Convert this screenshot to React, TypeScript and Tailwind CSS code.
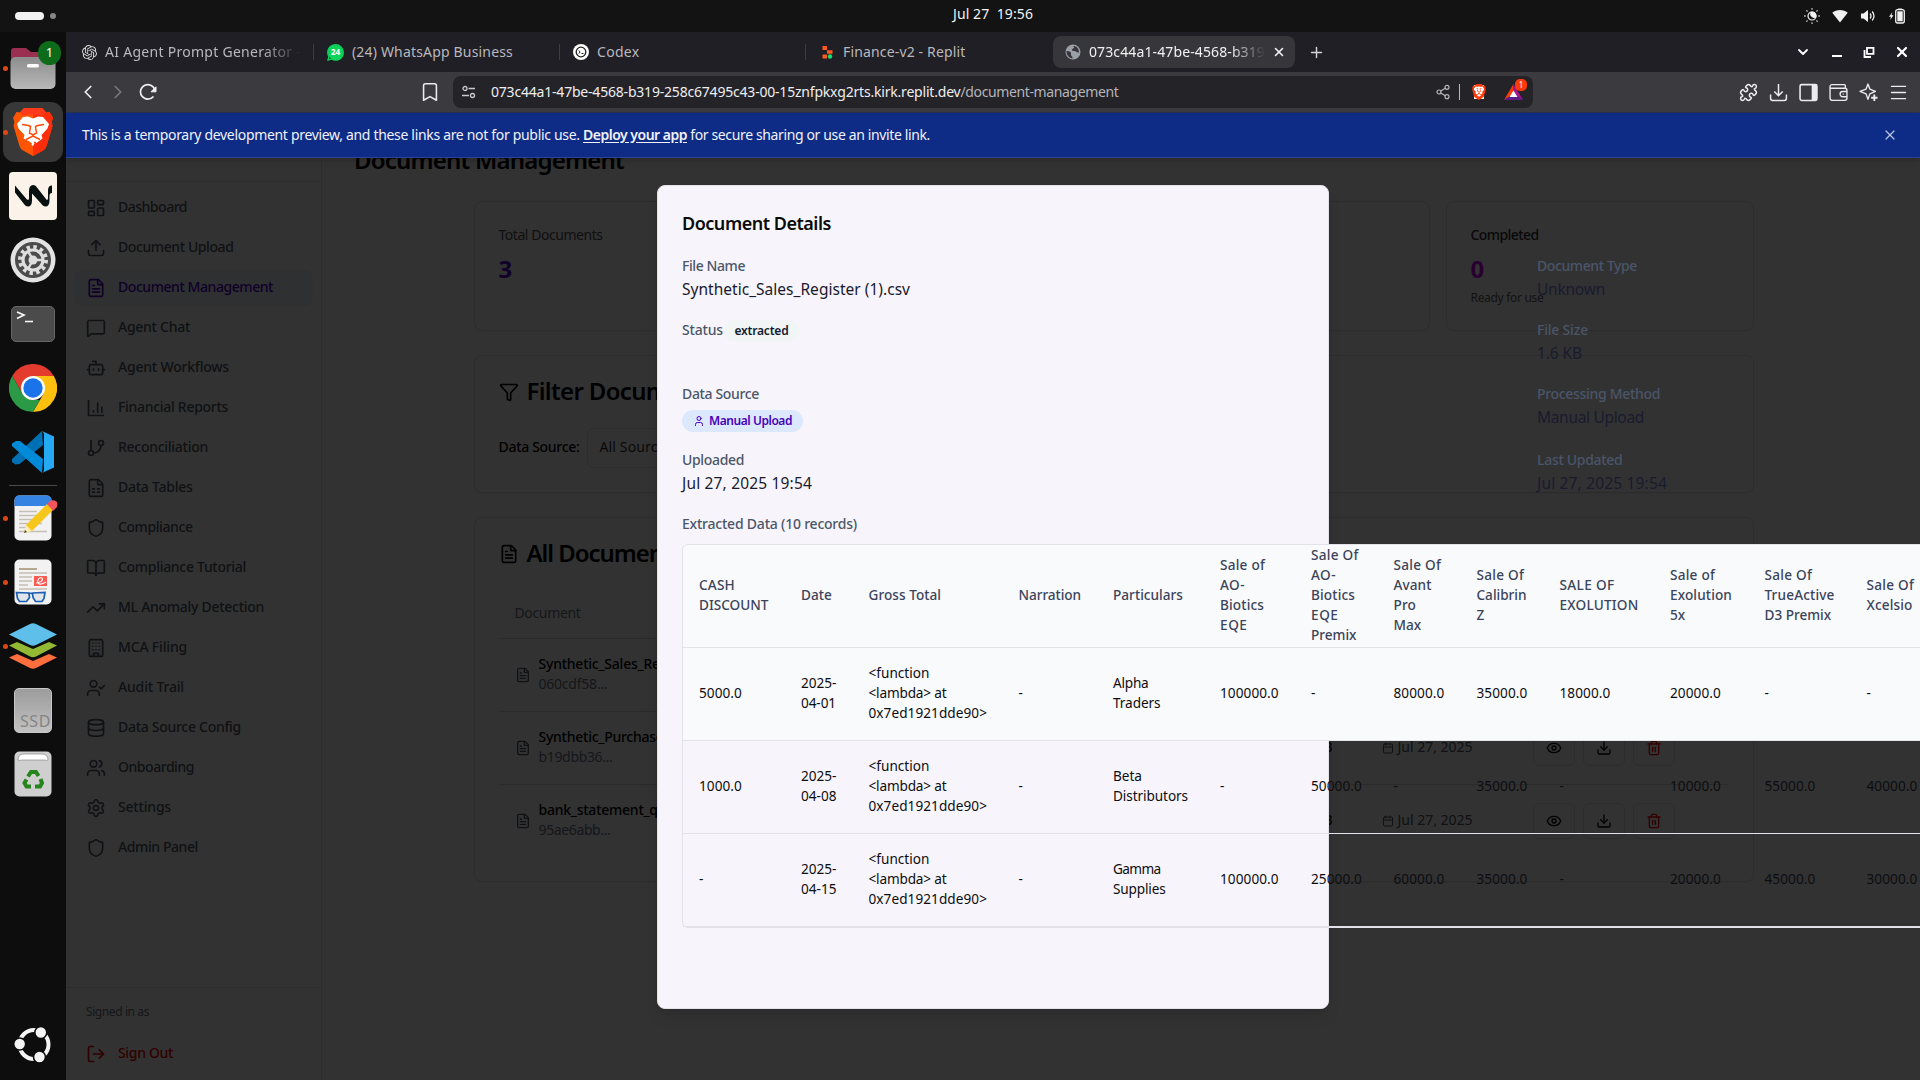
import { useLayoutEffect, useRef, useState, type ReactNode } from "react";
import {
  LayoutDashboard, Upload, FileText, MessageSquare, Bot, GitBranch, FileSpreadsheet, Shield,
  BookOpen, TrendingUp, UserCheck, Database, Users, Settings, LogOut, Filter, Calendar,
  Eye, Download, Trash2, User, X, Plus, ChevronDown, ChevronLeft, ChevronRight, Bookmark,
  Share2, Puzzle, Menu,
} from "lucide-react";
import { SiBrave, SiOpenai, SiWhatsapp } from "react-icons/si";

/* Text set to a given advance width by adjusting its tracking. */
function Fit({ w, children, className = "" }: { w: number; children: string; className?: string }) {
  const ref = useRef<HTMLSpanElement>(null);
  const [spacing, setSpacing] = useState(0);
  useLayoutEffect(() => {
    if (ref.current) {
      const natural = ref.current.getBoundingClientRect().width - spacing * children.length;
      setSpacing((w - natural) / children.length);
    }
  }, [w, children]);
  return (
    <span ref={ref} className={`whitespace-pre ${className}`} style={{ letterSpacing: `${spacing}px` }}>
      {children}
    </span>
  );
}

/* ---------- Desktop bar ---------- */

function TopBar() {
  return (
    <header className="flex h-8 shrink-0 items-center bg-[#131313] text-[#f2f2f2]">
      <div className="flex w-[953px] items-center gap-1.5 pl-[15px]">
        <div className="h-2 w-[29px] rounded-full bg-[#f2f2f2]" />
        <div className="size-1.5 rounded-full bg-[#868686]" />
      </div>
      <div className="-mt-1 flex-1 text-[14px] leading-5">
        <Fit w={80}>{"Jul 27  19:56"}</Fit>
      </div>
      <div className="flex items-center gap-3 pr-3.5">
        <svg viewBox="0 0 16 16" className="size-4">
          <circle cx="8" cy="8" r="4" fill="none" stroke="#f2f2f2" strokeWidth="1.2" />
          <path d="M8 3.6a4.4 4.4 0 0 1 4.2 6A4.4 4.4 0 0 1 6.4 4z" fill="#f2f2f2" />
          <g stroke="#b5b5b5" strokeWidth="1.3">
            <path d="M8 0v1.8M8 14.2V16M0 8h1.8M14.2 8H16M2.3 2.3l1.3 1.3M12.4 12.4l1.3 1.3M2.3 13.7l1.3-1.3M12.4 3.6l1.3-1.3" />
          </g>
        </svg>
        <svg viewBox="0 0 16 16" className="size-4">
          <path d="M8 14.5.3 4.8C4.5 1 11.5 1 15.7 4.8z" fill="#f2f2f2" />
        </svg>
        <svg viewBox="0 0 16 16" className="size-4">
          <path d="M1 5.5h2.5L8 2v12l-4.5-3.5H1z" fill="#f2f2f2" />
          <path d="M10 5.5q2 2.5 0 5M12.2 3.5q3.6 4.500 0 9" fill="none" stroke="#f2f2f2" strokeWidth="1.3" />
        </svg>
        <svg viewBox="0 0 18 16" className="h-4 w-[18px]">
          <path d="M4.5 4 1 8.8h2L2.200 12l3.300-4.700h-2z" fill="#f2f2f2" />
          <rect x="7.7" y="1.7" width="8.6" height="13.3" rx="2" fill="none" stroke="#f2f2f2" strokeWidth="1.3" />
          <rect x="9.3" y="3.3" width="5.4" height="10" fill="#f2f2f2" />
          <path d="M10 .5h4V2h-4z" fill="#f2f2f2" />
        </svg>
      </div>
    </header>
  );
}

/* ---------- Dock ---------- */

function Slot({ dot, children }: { dot?: boolean; children: ReactNode }) {
  return (
    <div className="relative flex h-16 items-center justify-center">
      {dot && <i className="absolute left-[3px] size-[5px] rounded-full bg-[#dd4814]" />}
      {children}
    </div>
  );
}

const Lines = () => (
  <path d="M5 16.500h18M5 20.500h23M5 24.500h15M5 28.500h23M5 32.500h10M5 36.500h28" stroke="#c4bfb4" strokeWidth="1.7" />
);

function Dock() {
  return (
    <nav className="flex w-[66px] shrink-0 flex-col bg-[#0d0d0d] pt-1">
      <Slot dot>
        <svg viewBox="0 0 46 44" className="size-[46px]">
          <path d="M1 5q0-3 3-3h12l5 4h20q4 0 4 4v15H1z" fill="#9b2f52" />
          <rect x="0.5" y="11" width="45" height="32" rx="5" fill="url(#fg)" />
          <rect x="17" y="18" width="12" height="3.5" rx="1.5" fill="#fff" />
          <defs><linearGradient id="fg" x2="0" y2="1"><stop stopColor="#8d8d8d" /><stop offset="1" stopColor="#b8b8b8" /></linearGradient></defs>
        </svg>
        <b className="absolute left-[38px] top-[5px] flex h-6 w-[23px] items-center justify-center rounded-full bg-[#0e6b19] text-[13px] font-normal text-white">1</b>
      </Slot>
      <Slot dot>
        <div className="flex size-[60px] items-center justify-center rounded-xl bg-[#383838]">
          <svg viewBox="0 0 40 48" className="h-12 w-10">
            <path d="M11 0h18l4 4.500 3.500-.5L40 10l-1.500 4 1 4-6 20q-1 3-3.500 4.500L20 48l-10-5.500Q7.500 41 6.500 38l-6-20 1-4L0 10l3.500-6 3.500.5z" fill="#ff5500" />
            <path d="M20 0h9l4 4.500 3.500-.5L40 10l-1.500 4 1 4-6 20q-1 3-3.500 4.500L20 48z" fill="#ff2d0a" />
            <path d="M11 0h18l4 4.500-3 3q-10-2-20 0l-3-3z" fill="#ff3a1c" />
            <path d="M20 10.500l5-2 5 .5 6 7-1.500 4.500-6 6.500 1 3.500-6 4.500-1.500-1.500-1 .5.500 1.500L20 38l-1.500-1 .5-1.500-2.500-2L10.500 30.500l1-3.500-6-6.500L4 16l6-7 5-.5z" fill="#fff" />
            <path d="M9 16.500l6.500 1 2 1-1 6.500 3.500 2 3.500-2-1-6.500 2-1 6.500-1M13 31.500l7-3.500 7 3.500" fill="none" stroke="#ff4a08" strokeWidth="1.5" />
          </svg>
        </div>
      </Slot>
      <Slot>
        <svg viewBox="0 0 48 48" className="size-12">
          <rect width="48" height="48" rx="4" fill="#fbf3ea" />
          <path d="M6 13.500 17.500 27c1.500 1.500 2.500 1 2.500-1v-7c0-4 1.500-6 4-6 2 0 3 1 4 2.500L37 27c1 1.500 2 1 2-1v-6.500c0-4 1-6 4-6V21c-2 0-2.500 1-2.500 3v4.500c0 4-1.500 6-4 6-2 0-3-1-4-2.500L23 21.500V28.500c0 4-1.500 6-4 6-2 0-3-1-4-2.500L6 20.500z" fill="#071210" />
        </svg>
      </Slot>
      <Slot>
        <svg viewBox="0 0 46 46" className="size-[46px]">
          <circle cx="23" cy="23" r="22.5" fill="#e3e3e3" />
          <circle cx="23" cy="23" r="18" fill="#4b4b4b" />
          <circle cx="23" cy="23" r="13" fill="none" stroke="#dedede" strokeWidth="4" strokeDasharray="3.4 3.4" />
          <circle cx="23" cy="23" r="10" fill="none" stroke="#dedede" strokeWidth="3.2" />
          <circle cx="23" cy="23" r="4.5" fill="#dedede" />
          <path d="M23 23h9M23 23l-4.500-8M23 23l-4.500 8" stroke="#dedede" strokeWidth="2.5" />
        </svg>
      </Slot>
      <Slot>
        <div className="h-9 w-11 rounded-[5px] border border-[#666] bg-[#4b4b4b]">
          <svg viewBox="0 0 44 36" className="h-9 w-11">
            <path d="M5 5l7 3-7 3.500M13 14.500h8" fill="none" stroke="#fff" strokeWidth="1.6" />
          </svg>
        </div>
      </Slot>
      <Slot>
        <svg viewBox="0 0 48 48" className="size-12">
          <path d="M3.200 12A24 24 0 0 1 44.800 12H24L13.600 30z" fill="#e33b2e" />
          <path d="M44.800 12A24 24 0 0 1 24 48l10.400-18L34 12z" fill="#fdc00f" />
          <path d="M24 12h20.800l-5 12H30z" fill="#fdc00f" />
          <path d="M3.200 12 13.600 30 24 36h6.900L24 48A24 24 0 0 1 3.200 12z" fill="#2a9a47" />
          <circle cx="24" cy="24" r="12" fill="#fff" />
          <circle cx="24" cy="24" r="9.7" fill="#1a73e8" />
        </svg>
      </Slot>
      <Slot>
        <svg viewBox="0 0 42 42" className="size-[42px]">
          <path d="M30 0 0 28v3l3.500 2.500 4-.5L31 14z" fill="#0070b5" />
          <path d="M4 10 0 12.500V15l30 27 1-14L8 10z" fill="#008ad8" />
          <path d="M30 0l12 5.500v31L30 42q2-1 2-4V4q0-3-2-4z" fill="#24a9f2" />
        </svg>
      </Slot>
      <div className="mx-[9px] mt-px h-px bg-[#4a4a4a]" />
      <Slot dot>
        <svg viewBox="0 0 44 46" className="ml-[5px] h-[46px] w-11">
          <rect width="37" height="45" rx="5" x=".5" y=".5" fill="#f2f2f2" />
          <path d="M.5 11V5.500q0-5 5-5h27q5 0 5 5V11z" fill="#3584e4" />
          <Lines />
          <path d="M10 38l2-8L33 9l6 6-21 21z" fill="#f6c71a" />
          <path d="M10 38l2-8 6 6z" fill="#fbeebb" />
          <path d="M10 38l1-3 2 2z" fill="#444" />
          <path d="M33 9l3-3q4-2 7 1 1 4-1 6l-3 3z" fill="#f2545b" />
        </svg>
      </Slot>
      <Slot dot>
        <svg viewBox="0 0 38 46" className="h-[46px] w-[38px]">
          <rect width="37" height="45" rx="5" x=".5" y=".5" fill="#f2f2f2" />
          <path d="M5 10h18" stroke="#b5a88f" strokeWidth="2" />
          <path d="M5 14h28M5 18h13M5 22h13M5 26h9M5 30h28" stroke="#c4bfb4" strokeWidth="1.7" />
          <path d="M20 17h13v10H20z" fill="#fa5b52" />
          <path d="M22 24c3 0 8-2 6-5-3-1-5 2-4 5 1 2 5 1 8-1" fill="none" stroke="#fff" strokeWidth="1.1" />
          <g fill="#dfe5ea" stroke="#1d5fb0" strokeWidth="1.7">
            <path d="M2.500 33.500 15 34l.5 4.500-3 4H5.500l-2-3zM18.500 34l12.500-.5-1 6-2 3h-6.500l-2.500-4z" />
            <path d="M14 35q2.500-1.500 5 0" fill="none" />
          </g>
        </svg>
      </Slot>
      <Slot dot>
        <svg viewBox="0 0 48 46" className="h-[46px] w-12">
          <path d="M0 34.500 8 31l16 7 16-7 8 3.500L27 45q-3 1.500-6 0z" fill="#ff6f3d" />
          <path d="M0 22.500 8 19l16 7 16-7 8 3.500L27 33.500q-3 1.500-6 0z" fill="#93b833" />
          <path d="M0 11.500 21 1q3-1.500 6 0l21 10.500L27 22q-3 1.500-6 0z" fill="#5dbfea" />
        </svg>
      </Slot>
      <Slot>
        <div className="flex h-[45px] w-[38px] items-end justify-end rounded-[5px] border border-[#c8c8c8] bg-linear-to-b from-[#9c9c9c] to-[#c2c2c2] pb-px text-[16px] leading-5 text-[#858585]">
          <Fit w={31}>SSD</Fit>
        </div>
      </Slot>
      <Slot>
        <svg viewBox="0 0 38 46" className="h-[46px] w-[38px]">
          <rect width="37" height="45" rx="5" x=".5" y=".5" fill="#cfcfcf" />
          <path d="M4 9q0-6 6-6h18q6 0 6 6-2 1-3 0H8Q5 10 4 9z" fill="#fff" stroke="#777" strokeWidth=".6" />
          <g fill="none" stroke="#26861d" strokeWidth="4">
            <path d="M14 25.500l3-4.500h5l2.500 4" />
            <path d="M26.500 28l1.500 4-2 3.500h-5" />
            <path d="M17 35.500h-4.500L10.500 32l2-3.500" />
          </g>
        </svg>
      </Slot>
      <div className="mb-[17px] mt-auto flex justify-center">
        <svg viewBox="0 0 38 38" className="size-[38px]">
          <circle cx="20" cy="19.5" r="14.5" fill="none" stroke="#f4f4f4" strokeWidth="4" />
          <g fill="#f4f4f4" stroke="#0d0d0d" strokeWidth="1.6">
            <circle cx="5.7" cy="19" r="6" /><circle cx="26.8" cy="7.5" r="6" /><circle cx="25.5" cy="32" r="6" />
          </g>
        </svg>
      </div>
    </nav>
  );
}

/* ---------- Browser ---------- */

function Tabs() {
  return (
    <div className="flex h-10 shrink-0 items-center bg-[#201f25] text-[14px] leading-5 text-[#b9b8bd]">
      <div className="flex w-[247px] items-center gap-2 pl-4">
        <SiOpenai className="size-[15px] text-[#d8d8d8]" />
        <span className="-mt-px w-[196px] overflow-hidden mask-r-from-80%"><Fit w={196}>AI Agent Prompt Generator -</Fit></span>
      </div>
      <div className="flex h-4 w-[246px] items-center border-l border-[#3d3c42] pl-[13px]">
        <span className="relative flex size-[17px] items-center justify-center">
          <SiWhatsapp className="size-[17px] text-[#0ad55a]" />
          <span className="absolute inset-px flex items-center justify-center rounded-full bg-[#0ad55a] text-[8px] font-bold text-white">24</span>
        </span>
        <span className="-mt-px ml-2"><Fit w={161}>(24) WhatsApp Business</Fit></span>
      </div>
      <div className="flex h-4 w-[246px] items-center border-l border-[#3d3c42] pl-[13px]">
        <svg viewBox="0 0 16 16" className="size-4">
          <circle cx="8" cy="8" r="8" fill="#fff" />
          <circle cx="8" cy="8" r="4.8" fill="none" stroke="#222" strokeWidth="1.3" />
          <path d="M6 6.500l1 1.500-1 1.500M8.500 9.500h2" fill="none" stroke="#222" />
        </svg>
        <span className="-mt-px ml-2"><Fit w={42.5}>Codex</Fit></span>
      </div>
      <div className="flex h-4 w-[248px] items-center border-l border-[#3d3c42] pl-4">
        <svg viewBox="0 0 11 13" className="h-[13px] w-[11px]">
          <path d="M.5 0H5v4H.5zM5 4.200h5.500v3.500H5zM.5 8.500H5v4H.5z" fill="#ff5a1a" />
          <circle cx="8" cy="10.5" r="2.2" fill="#16e06e" />
        </svg>
        <span className="-mt-px ml-2.5"><Fit w={122.5}>Finance-v2 - Replit</Fit></span>
      </div>
      <div className="flex h-8 w-[242px] items-center rounded-lg bg-[#37363b] pl-3 text-[#f1f1f3]">
        <svg viewBox="0 0 16 16" className="size-4">
          <circle cx="8" cy="8" r="7.5" fill="#9aa0a6" />
          <path d="M1.500 7c3 0 5 1 4.500 3s2 2 1.500 4.500A7 7 0 0 1 1.500 7zM8 2c2 1 1 2-.5 3s0 2 2 2 2 2 4.500 1.500C14 4 11 1.700 8 2z" fill="#37363b" />
        </svg>
        <span className="-mt-px ml-2 w-[176px] overflow-hidden mask-r-from-80%"><Fit w={176}>073c44a1-47be-4568-b319</Fit></span>
        <X className="ml-[7px] size-3.5" strokeWidth={2.8} />
      </div>
      <Plus className="ml-[13px] size-[17px] text-[#d6d6d8]" />
      <div className="ml-auto flex items-center pr-2.5 text-white">
        <ChevronDown className="mr-[20px] size-4" strokeWidth={2.7} />
        <svg viewBox="0 0 12 14" className="mr-5 h-3.5 w-3"><path d="M1 11h10" stroke="#fff" strokeWidth="2" /></svg>
        <svg viewBox="0 0 12 12" className="mr-[19px] size-3">
          <path d="M4 1.800h6.500v6H4zM1.500 4v7H8" fill="none" stroke="#fff" strokeWidth="1.8" />
        </svg>
        <X className="size-4" strokeWidth={3.2} />
      </div>
    </div>
  );
}

function Toolbar() {
  return (
    <div className="flex h-[41px] shrink-0 items-center border-b border-[#2c3050] bg-[#3b3a3f] pl-[11px] text-[#ececee]">
      <ChevronLeft className="h-6 w-[22px]" strokeWidth={1.9} />
      <ChevronRight className="ml-2 h-6 w-[22px] text-[#7d7c81]" strokeWidth={1.6} />
      <svg viewBox="0 0 18 18" className="ml-2.5 size-[18px]">
        <path d="M14.500 13.500A7.300 7.300 0 1 1 16 7.500" fill="none" stroke="#f0f0f0" strokeWidth="1.7" />
        <path d="M12 8.800h5V3.800z" fill="#f0f0f0" stroke="#f0f0f0" />
      </svg>
      <Bookmark className="ml-[262px] size-[22px]" strokeWidth={1.7} />
      <div className="ml-3 flex h-8 w-[1080px] items-center rounded-lg bg-[#242328] text-[14px] leading-5">
        <svg viewBox="0 0 14 14" className="ml-[9px] size-3.5">
          <g fill="none" stroke="#c9c8cc" strokeWidth="1.3"><circle cx="3" cy="3.5" r="2" /><path d="M6.500 3.500H13M0 10.500h7" /><circle cx="10.5" cy="10.5" r="2" /></g>
        </svg>
        <span className="ml-[15px] text-[#eeeef0]"><Fit w={469.5}>073c44a1-47be-4568-b319-258c67495c43-00-15znfpkxg2rts.kirk.replit.dev</Fit></span>
        <span className="text-[#b5b4b9]"><Fit w={158}>/document-management</Fit></span>
        <Share2 className="ml-auto size-4 text-[#b9b8bd]" strokeWidth={1.7} />
        <div className="ml-2 h-4 w-px bg-[#b9b8bd]" />
        <span className="relative ml-[11px] flex h-[20px] w-4 items-center justify-center">
          <i className="absolute inset-x-[3px] inset-y-[3px] bg-white" />
          <SiBrave className="relative h-5 w-[17px] text-[#ff3a0a]" />
        </span>
        <span className="relative ml-[17px] mr-2.5 h-5 w-[19px]">
          <svg viewBox="0 0 19 18" className="mt-px h-[18px] w-[19px]">
            <path d="M9.500 1 0 17l9.500-6z" fill="#ff3a0a" /><path d="M9.500 1 19 17l-9.500-6z" fill="#a3168f" />
            <path d="M0 17h19l-9.500-6z" fill="#5d1b8c" /><path d="M9.500 7.500 5.500 14h8z" fill="#fff" />
          </svg>
          <i className="absolute -top-[3px] left-[11px] flex size-3 items-center justify-center rounded-[5px] bg-[#ff3a0a] text-[8px] not-italic text-white">1</i>
        </span>
      </div>
      <div className="ml-auto flex items-center gap-[11px] pr-3">
        <Puzzle className="size-[19px]" strokeWidth={1.9} />
        <svg viewBox="0 0 18 18" className="size-[19px]"><path d="M9 1v10.500M5 8l4 4 4-4M1.500 11v3.500q0 2 2 2h11q2 0 2-2V11" fill="none" stroke="#ececee" strokeWidth="1.4" /></svg>
        <svg viewBox="0 0 18 18" className="size-[19px]"><rect x="1" y="1.5" width="16" height="15" rx="1.5" fill="none" stroke="#ececee" strokeWidth="1.5" /><path d="M12 1.500h5v15h-5z" fill="#ececee" /></svg>
        <svg viewBox="0 0 18 18" className="size-[19px]"><path d="M15.500 5V2.500q0-1-1-1H3q-2 0-2 2T3 5h12q2 0 2 2v7.500q0 2-2 2H3.500q-2.500 0-2.500-2.500V3.500M17 8h-4a2.500 2.500 0 0 0 0 5h4M13 10.500h1" fill="none" stroke="#ececee" strokeWidth="1.3" /></svg>
        <svg viewBox="0 0 18 18" className="size-[19px]"><path d="M8.500 1l1.800 4.700L15.500 8l-5.200 2.300L8.500 15.500 6.700 10.300 1 8l5.700-2.300z" fill="none" stroke="#ececee" strokeWidth="1.3" strokeLinejoin="round" /><path d="M14.500 11v6M11.500 14h6" stroke="#ececee" strokeWidth="1.8" /></svg>
        <Menu className="-mx-px size-[21px]" strokeWidth={1.5} />
      </div>
    </div>
  );
}

function Banner() {
  return (
    <div className="relative z-20 flex h-[45px] shrink-0 items-center border-b border-[#2a4597] bg-[#0e2b85] pl-4 text-[14px] leading-5 text-[#f0f2fa] shadow-md">
      <span className="-mt-px flex">
        <Fit w={501}>{"This is a temporary development preview, and these links are not for public use. "}</Fit>
        <Fit w={104} className="font-semibold underline underline-offset-2">Deploy your app</Fit>
        <Fit w={243}>{" for secure sharing or use an invite link."}</Fit>
      </span>
      <X className="ml-auto mr-[22px] size-4 text-[#b9c3e6]" strokeWidth={1.8} />
    </div>
  );
}

/* ---------- Application page ---------- */

function ReportIcon() {
  return (
    <svg viewBox="0 0 24 24" className="size-5" fill="none" stroke="currentColor" strokeWidth="2" strokeLinecap="round">
      <path d="M3 3v18h18M9 17v-2M14 17V6M19 17v-6" />
    </svg>
  );
}

function OfficeIcon() {
  return (
    <svg viewBox="0 0 24 24" className="size-5" fill="none" stroke="currentColor" strokeWidth="2" strokeLinecap="round">
      <rect x="4" y="2" width="16" height="20" rx="2" />
      <path d="M9 22v-3.500h6V22M8 6h.01M12 6h.01M16 6h.01M8 10h.01M12 10h.01M16 10h.01M8 14h.01M12 14h.01M16 14h.01" />
    </svg>
  );
}

const ic = "size-5";
const NAV: [string, number, ReactNode][] = [
  ["Dashboard", 69, <LayoutDashboard className={ic} />],
  ["Document Upload", 115.5, <Upload className={ic} />],
  ["Document Management", 155, <FileText className={ic} />],
  ["Agent Chat", 72, <MessageSquare className={ic} />],
  ["Agent Workflows", 111, <Bot className={ic} />],
  ["Financial Reports", 110, <ReportIcon />],
  ["Reconciliation", 90, <GitBranch className={ic} />],
  ["Data Tables", 74.5, <FileSpreadsheet className={ic} />],
  ["Compliance", 74.5, <Shield className={ic} />],
  ["Compliance Tutorial", 128, <BookOpen className={ic} />],
  ["ML Anomaly Detection", 146, <TrendingUp className={ic} />],
  ["MCA Filing", 69, <OfficeIcon />],
  ["Audit Trail", 66, <UserCheck className={ic} />],
  ["Data Source Config", 123, <Database className={ic} />],
  ["Onboarding", 76, <Users className={ic} />],
  ["Settings", 53, <Settings className={ic} />],
  ["Admin Panel", 80, <Shield className={ic} />],
];

function Sidebar() {
  return (
    <aside className="flex w-64 shrink-0 flex-col border-r border-[#e2e2e2]">
      <div className="h-6 shrink-0 border-b border-[#dedede]" />
      <div className="flex flex-1 flex-col gap-1 p-2">
        {NAV.map(([name, w, icon]) => (
          <div
            key={name}
            className={`flex h-9 items-center gap-3 rounded-lg px-3 text-sm font-medium ${
              name === "Document Management" ? "bg-[#ebeff6] text-[#5200c8]" : "text-[#4b5563]"
            }`}
          >
            {icon}
            <span className="-mt-0.5"><Fit w={w}>{name}</Fit></span>
          </div>
        ))}
      </div>
      <div className="flex h-[93px] flex-col border-t border-[#dedede] px-5 pt-4 text-xs text-[#6b7280]">
        <Fit w={63} className="w-fit">Signed in as</Fit>
        <div className="mt-[24px] flex items-center gap-3 text-sm font-medium text-[#f00000]">
          <LogOut className={ic} />
          <span className="-mt-0.5"><Fit w={55}>Sign Out</Fit></span>
        </div>
      </div>
    </aside>
  );
}

const CARD = "rounded-lg border border-[#dcdcdc] bg-[#fafafa] shadow-xs";

function Stat({ label, lw, value, note, tone, labelTone }: { label: string; lw: number; value: string; note?: string; tone: string; labelTone: string }) {
  return (
    <div className={`h-[130px] px-6 pt-[23px] ${CARD}`}>
      <div className={`text-sm ${labelTone}`}><Fit w={lw}>{label}</Fit></div>
      <div className={`mt-2 text-2xl font-bold leading-8 ${tone}`}>{value}</div>
      {note && <div className="mt-1 pt-px text-xs text-[#606060]"><Fit w={73}>{note}</Fit></div>}
    </div>
  );
}

const DOCS: [string, number, string, number][] = [
  ["Synthetic_Sales_Register (1).csv", 202, "060cdf58...", 69],
  ["Synthetic_Purchase_Register.csv", 206, "b19dbb36...", 74],
  ["bank_statement_q1.csv", 151, "95ae6abb...", 72],
];

function Page() {
  return (
    <main className="flex flex-1 flex-col pr-[15px] text-black">
      <h1 className="-mt-[14px] ml-8 text-2xl font-semibold leading-8"><Fit w={270}>Document Management</Fit></h1>
      <div className="mx-auto mt-[25px] flex w-[1280px] flex-col gap-6">
        <div className="grid grid-cols-4 gap-4">
          <Stat label="Total Documents" lw={104} value="3" tone="text-[#5200c8]" labelTone="text-[#505050]" />
          <Stat label="Pending" lw={52} value="0" tone="text-[#5200c8]" labelTone="text-[#505050]" />
          <Stat label="Processing" lw={70} value="3" tone="text-[#5200c8]" labelTone="text-[#505050]" />
          <Stat label="Completed" lw={68} value="0" note="Ready for use" tone="text-[#c800f0]" labelTone="text-[#303030] font-medium" />
        </div>
        <section className={`h-[138px] px-6 pt-[19px] ${CARD}`}>
          <h2 className="flex items-center gap-2 text-2xl font-semibold leading-8">
            <Filter className="mt-0.5 size-5" /><Fit w={190}>Filter Documents</Fit>
          </h2>
          <div className="mt-[21px] flex items-center text-sm font-medium">
            <span className="-mt-0.5 w-[88px]"><Fit w={81}>Data Source:</Fit></span>
            <span className="flex h-10 w-48 items-center rounded-md border border-[#dcdcdc] px-3 font-normal text-[#303030]"><span className="-mt-0.5"><Fit w={73}>All Sources</Fit></span></span>
          </div>
        </section>
        <section className={`h-[365px] px-6 pt-[19px] ${CARD}`}>
          <h2 className="flex items-center gap-2 text-2xl font-semibold leading-8">
            <FileText className="mt-0.5 size-5" /><Fit w={156}>All Documents</Fit>
          </h2>
          <div className="mt-[21px] flex h-[49px] items-center border-b border-[#cfcfcf] px-4 pb-0.5 text-sm text-[#6b7280]"><Fit w={66}>Document</Fit></div>
          {DOCS.map(([name, w, id, iw], i) => (
            <div key={id} className={`flex h-[73px] items-center px-4 text-sm ${i < 2 ? "border-b border-[#cfcfcf]" : "pb-px"}`}>
              <FileText className="mr-2 size-4 text-[#4b5563]" />
              <div className="flex w-[780px] flex-col pb-0.5">
                <Fit w={w} className="w-fit font-medium">{name}</Fit>
                <Fit w={iw} className="w-fit text-[#6b7280]">{id}</Fit>
              </div>
              <span className="-mt-0.5 w-[63px] pl-[5px]"><Fit w={9}>B</Fit></span>
              <span className="flex w-[151px] items-center gap-1 text-[#4b5563]"><Calendar className="size-3" /><span className="-mt-0.5"><Fit w={75}>Jul 27, 2025</Fit></span></span>
              <div className="flex gap-2">
                {[Eye, Download, Trash2].map((Icon, k) => (
                  <span key={k} className={`flex h-9 w-[42px] items-center justify-center rounded-md border border-[#dcdcdc] ${k === 2 ? "text-[#ff0000]" : ""}`}>
                    <Icon className="size-4" />
                  </span>
                ))}
              </div>
            </div>
          ))}
        </section>
      </div>
    </main>
  );
}

/* ---------- Document details dialog ---------- */

function Field({ label, lw, value, vw }: { label: string; lw: number; value?: string; vw?: number }) {
  return (
    <div className="flex flex-col text-[#1a1a2e]">
      <Fit w={lw} className="w-fit text-sm font-medium text-[#4b5569]">{label}</Fit>
      {value && <Fit w={vw ?? 0} className="-mt-px w-fit text-[15.5px] leading-7">{value}</Fit>}
    </div>
  );
}

type Line = [string, number];
const HEAD: Line[][] = [
  [["CASH", 36], ["DISCOUNT", 69.5]],
  [["Date", 31]],
  [["Gross Total", 72.5]],
  [["Narration", 62.5]],
  [["Particulars", 70]],
  [["Sale of", 45], ["AO-", 25], ["Biotics", 44], ["EQE", 27.5]],
  [["Sale Of", 47.5], ["AO-", 25], ["Biotics", 44], ["EQE", 27.5], ["Premix", 45.5]],
  [["Sale Of", 47.5], ["Avant", 38], ["Pro", 22.5], ["Max", 27.5]],
  [["Sale Of", 47.5], ["Calibrin", 50], ["Z", 8.5]],
  [["SALE OF", 55], ["EXOLUTION", 79]],
  [["Sale of", 45], ["Exolution", 62], ["5x", 15]],
  [["Sale Of", 47.5], ["TrueActive", 70], ["D3 Premix", 66.5]],
  [["Sale Of", 47.5], ["Xcelsio", 46]],
];
const LAMBDA: Line[] = [["<function", 61], ["<lambda> at", 78], ["0x7ed1921dde90>", 118.5]];
const dash: Line[] = [["-", 5]];
const num = (s: string): Line[] => [[s, s.length * 7.9 - 4.5]];
const ROWS: Line[][][] = [
  [num("5000.0"), [["2025-", 35.5], ["04-01", 35]], LAMBDA, dash, [["Alpha", 35.5], ["Traders", 47.5]], num("100000.0"), dash, num("80000.0"), num("35000.0"), num("18000.0"), num("20000.0"), dash, dash],
  [num("1000.0"), [["2025-", 35.5], ["04-08", 35.5]], LAMBDA, dash, [["Beta", 29], ["Distributors", 75]], dash, num("50000.0"), dash, num("35000.0"), dash, num("10000.0"), num("55000.0"), num("40000.0")],
  [dash, [["2025-", 35.5], ["04-15", 35.5]], LAMBDA, dash, [["Gamma", 47.5], ["Supplies", 52.5]], num("100000.0"), num("25000.0"), num("60000.0"), num("35000.0"), dash, num("20000.0"), num("45000.0"), num("30000.0")],
];

function Row({ cells, className }: { cells: Line[][]; className: string }) {
  return (
    <div className={`grid grid-cols-[102px_67.5px_150px_94.5px_107px_91px_82.5px_83px_83px_110.5px_94.5px_102px_90px] items-center border-b border-[#e4e2e9] ${className}`}>
      {cells.map((lines, i) => (
        <div key={i} className="flex flex-col px-4 pb-0.5">
          {lines.map(([t, w], k) => <Fit key={k} w={w} className="w-fit">{t}</Fit>)}
        </div>
      ))}
    </div>
  );
}

function Dialog() {
  return (
    <div className="absolute left-[591px] top-[27px] z-10 flex h-[824px] w-[672px] flex-col rounded-lg border border-[#e4e2e9] bg-[#f7f5fb] px-6 pt-6 shadow-lg">
      <h3 className="mt-px text-lg font-semibold leading-6 text-[#0a0a0a]"><Fit w={149}>Document Details</Fit></h3>
      <div className="mt-[21px] grid w-[1200px] grid-cols-[855px_1fr] grid-rows-[64px_64px_66px_64px] text-sm">
        <Field label="File Name" lw={63} value="Synthetic_Sales_Register (1).csv" vw={228} />
        <Field label="Document Type" lw={100} value="Unknown" vw={68} />
        <div className="flex items-start">
          <Field label="Status" lw={41} />
          <span className="ml-px flex h-[22px] w-[75px] items-center justify-center rounded-full bg-[#f1f5f6] text-xs font-semibold text-[#141a2e]"><span className="-mt-px"><Fit w={54}>extracted</Fit></span></span>
        </div>
        <Field label="File Size" lw={51} value="1.6 KB" vw={45} />
        <div>
          <Field label="Data Source" lw={77} />
          <span className="mt-1.5 flex h-[22px] w-[121px] items-center gap-1 rounded-full bg-[#dbe8fe] px-[11px] text-xs font-semibold text-[#4a00b8]">
            <User className="size-3" /><span className="-mt-px"><Fit w={83}>Manual Upload</Fit></span>
          </span>
        </div>
        <Field label="Processing Method" lw={123} value="Manual Upload" vw={107} />
        <Field label="Uploaded" lw={62} value="Jul 27, 2025 19:54" vw={130} />
        <Field label="Last Updated" lw={85.5} value="Jul 27, 2025 19:54" vw={130} />
      </div>
      <Field label="Extracted Data (10 records)" lw={175} />
      <div className="mt-2.5 w-[1260px] rounded-md border border-[#e4e2e9] text-[13.6px] leading-5 text-[#0d0d10]">
        <Row cells={HEAD} className="h-[103px] rounded-t-md bg-[#f9fafc] font-medium text-[#3b445a]" />
        {ROWS.map((r, i) => <Row key={i} cells={r} className={i === 0 ? "h-[93px] bg-[#f9fafc]" : "h-[93px]"} />)}
      </div>
    </div>
  );
}

export default function App() {
  return (
    <div className="flex h-[1080px] w-[1920px] flex-col overflow-hidden bg-[#131313] font-['Noto_Sans',sans-serif]">
      <TopBar />
      <div className="flex min-h-0 flex-1">
        <Dock />
        <div className="flex min-w-0 flex-1 flex-col">
          <Tabs />
          <Toolbar />
          <Banner />
          <div className="relative flex min-h-0 flex-1 overflow-hidden bg-[#fafafa]">
            <Sidebar />
            <Page />
            <div className="absolute inset-0 bg-black/80" />
            <Dialog />
          </div>
        </div>
      </div>
    </div>
  );
}
